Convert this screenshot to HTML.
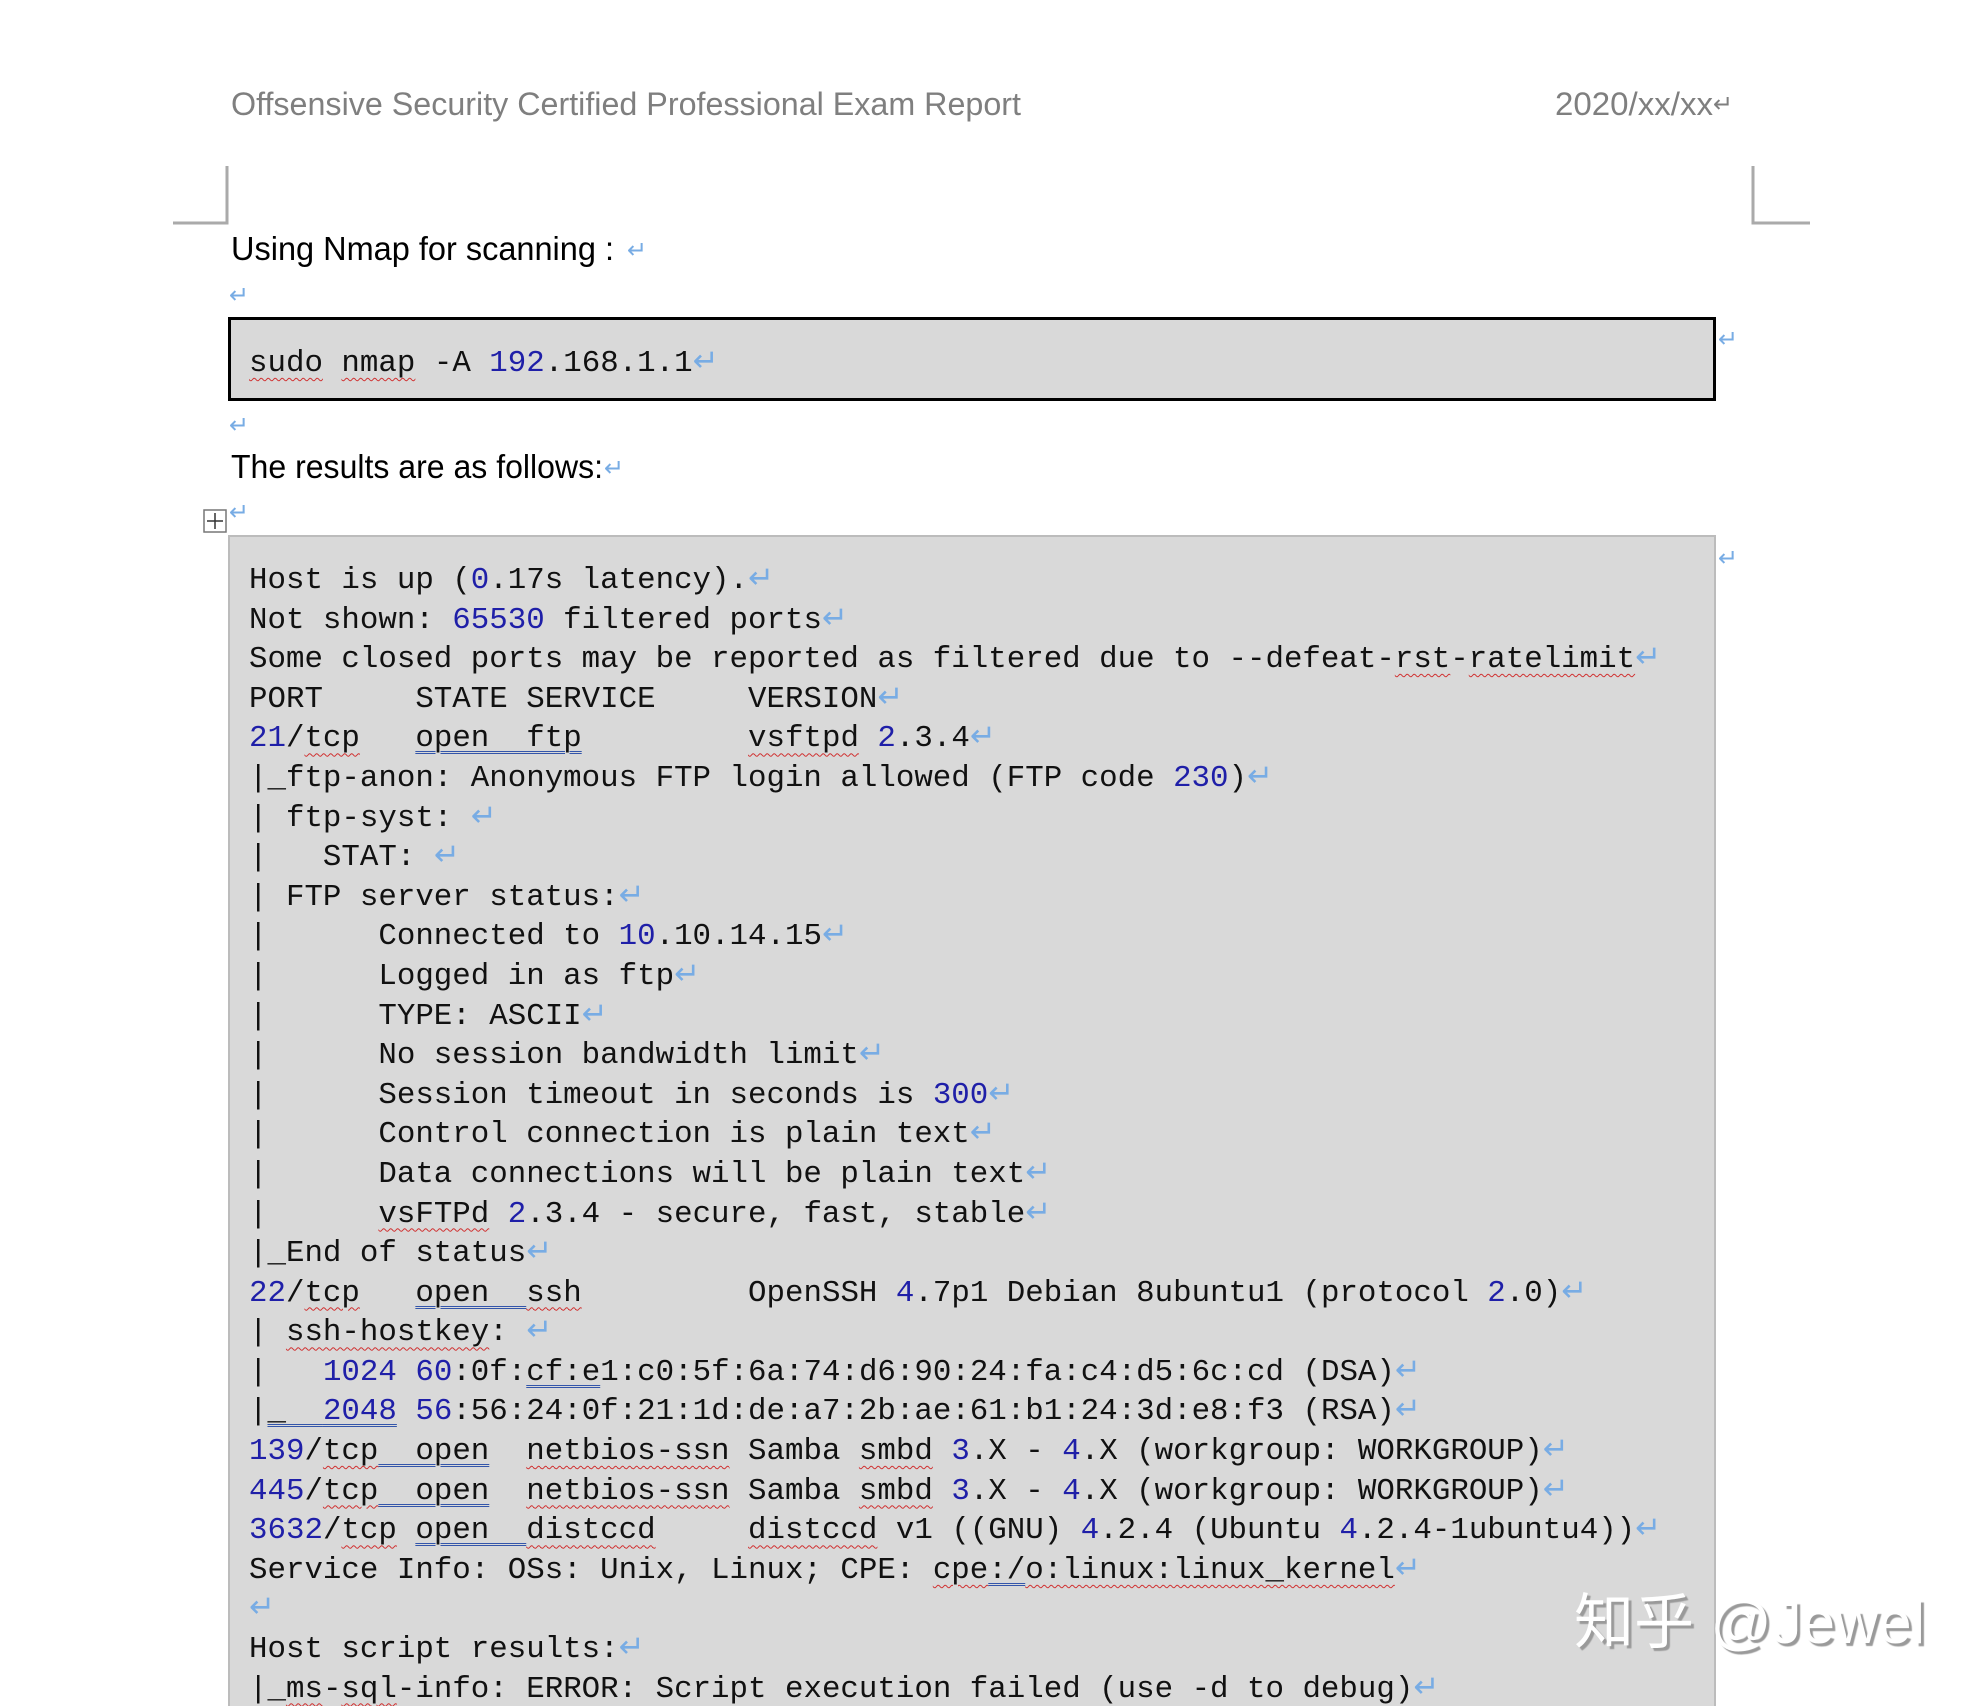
<!DOCTYPE html>
<html><head><meta charset="utf-8">
<style>
html,body{margin:0;padding:0;background:#fff;overflow:hidden;width:1980px;height:1706px;}
body{position:relative;font-family:"Liberation Sans",sans-serif;}
.abs{position:absolute;}
.a{color:#78ace4;}
.n{color:#1f1fa8;}
.w{text-decoration:underline wavy #d03030;text-decoration-thickness:1px;text-underline-offset:6px;}
.d{text-decoration:underline double #3355aa;text-decoration-thickness:1px;text-underline-offset:5px;}
pre{margin:0;font-family:"Liberation Mono",monospace;font-size:30.8px;line-height:39.6px;color:#111;}
.box1{left:228px;top:317px;width:1482px;height:78px;background:#d9d9d9;border:3px solid #000;}
.box2{left:228px;top:535px;width:1484px;height:1180px;background:#d9d9d9;border:2px solid #bcbcbc;}
</style></head><body>
<svg class="abs" style="left:0;top:0" width="1980" height="1706">
<text x="231" y="115" font-family="Liberation Sans" font-size="32" fill="#7f7f7f" textLength="790" lengthAdjust="spacingAndGlyphs">Offsensive Security Certified Professional Exam Report</text>
<text x="1555" y="115" font-family="Liberation Sans" font-size="32" fill="#7f7f7f" textLength="158" lengthAdjust="spacingAndGlyphs">2020/xx/xx</text>
<text x="1713" y="112" font-family="DejaVu Sans" font-size="24" fill="#7f7f7f">↵</text>
<path d="M227 166V223H173" stroke="#aaa" stroke-width="3" fill="none"/>
<path d="M1753 166V223H1810" stroke="#aaa" stroke-width="3" fill="none"/>
<text x="231" y="260" font-family="Liberation Sans" font-size="33" fill="#000" textLength="383" lengthAdjust="spacingAndGlyphs">Using Nmap for scanning :</text>
<text x="627" y="258" font-family="DejaVu Sans" font-size="24" fill="#78ace4">↵</text>
<text x="229" y="303" font-family="DejaVu Sans" font-size="24" fill="#78ace4">↵</text>
<text x="229" y="433" font-family="DejaVu Sans" font-size="24" fill="#78ace4">↵</text>
<text x="231" y="478" font-family="Liberation Sans" font-size="33" fill="#000" textLength="372" lengthAdjust="spacingAndGlyphs">The results are as follows:</text>
<text x="604" y="476" font-family="DejaVu Sans" font-size="24" fill="#78ace4">↵</text>
<text x="229" y="520" font-family="DejaVu Sans" font-size="24" fill="#78ace4">↵</text>
<rect x="204" y="510" width="22" height="22" fill="#fff" stroke="#777" stroke-width="1.5"/>
<path d="M215 513V529M207 521H223" stroke="#333" stroke-width="1.5"/>
<text x="1718" y="347" font-family="DejaVu Sans" font-size="24" fill="#78ace4">↵</text>
<text x="1718" y="566" font-family="DejaVu Sans" font-size="24" fill="#78ace4">↵</text>
</svg>
<div class="abs box1"></div>
<pre class="abs" style="left:249px;top:344px;"><span class="w">sudo</span> <span class="w">nmap</span> -A <span class="n">192</span>.168.1.1<span class="a">↵</span></pre>
<div class="abs box2"></div>
<pre class="abs" style="left:249px;top:561px;">Host is up (<span class="n">0</span>.17s latency).<span class="a">↵</span>
Not shown: <span class="n">65530</span> filtered ports<span class="a">↵</span>
Some closed ports may be reported as filtered due to --defeat-<span class="w">rst</span>-<span class="w">ratelimit</span><span class="a">↵</span>
PORT     STATE SERVICE     VERSION<span class="a">↵</span>
<span class="n">21</span>/<span class="w">tcp</span>   <span class="d">open  ftp</span>         <span class="w">vsftpd</span> <span class="n">2</span>.3.4<span class="a">↵</span>
|_ftp-anon: Anonymous FTP login allowed (FTP code <span class="n">230</span>)<span class="a">↵</span>
| ftp-syst: <span class="a">↵</span>
|   STAT: <span class="a">↵</span>
| FTP server status:<span class="a">↵</span>
|      Connected to <span class="n">10</span>.10.14.15<span class="a">↵</span>
|      Logged in as ftp<span class="a">↵</span>
|      TYPE: ASCII<span class="a">↵</span>
|      No session bandwidth limit<span class="a">↵</span>
|      Session timeout in seconds is <span class="n">300</span><span class="a">↵</span>
|      Control connection is plain text<span class="a">↵</span>
|      Data connections will be plain text<span class="a">↵</span>
|      <span class="w">vsFTPd</span> <span class="n">2</span>.3.4 - secure, fast, stable<span class="a">↵</span>
|_End of status<span class="a">↵</span>
<span class="n">22</span>/<span class="w">tcp</span>   <span class="d">open  </span><span class="w">ssh</span>         OpenSSH <span class="n">4</span>.7p1 Debian 8ubuntu1 (protocol <span class="n">2</span>.0)<span class="a">↵</span>
| <span class="w">ssh-hostkey</span>: <span class="a">↵</span>
|   <span class="n">1024</span> <span class="n">60</span>:0f:<span class="d">cf:e</span>1:c0:5f:6a:74:d6:90:24:fa:c4:d5:6c:cd (DSA)<span class="a">↵</span>
|<span class="d">_  <span class="n">2048</span></span> <span class="n">56</span>:56:24:0f:21:1d:de:a7:2b:ae:61:b1:24:3d:e8:f3 (RSA)<span class="a">↵</span>
<span class="n">139</span>/<span class="w">tcp</span><span class="d">  open</span>  <span class="w">netbios-ssn</span> Samba <span class="w">smbd</span> <span class="n">3</span>.X - <span class="n">4</span>.X (workgroup: WORKGROUP)<span class="a">↵</span>
<span class="n">445</span>/<span class="w">tcp</span><span class="d">  open</span>  <span class="w">netbios-ssn</span> Samba <span class="w">smbd</span> <span class="n">3</span>.X - <span class="n">4</span>.X (workgroup: WORKGROUP)<span class="a">↵</span>
<span class="n">3632</span>/<span class="w">tcp</span> <span class="d">open  </span><span class="w">distccd</span>     <span class="w">distccd</span> v1 ((GNU) <span class="n">4</span>.2.4 (Ubuntu <span class="n">4</span>.2.4-1ubuntu4))<span class="a">↵</span>
Service Info: OSs: Unix, Linux; CPE: <span class="w">cpe</span><span class="d">:/</span><span class="w">o:linux:linux_kernel</span><span class="a">↵</span>
<span class="a">↵</span>
Host script results:<span class="a">↵</span>
|_<span class="w">ms</span>-<span class="w">sql</span>-info: ERROR: Script execution failed (use -d to debug)<span class="a">↵</span></pre>
<div class="abs" style="left:1574px;top:1588px;font-family:'Liberation Sans','Noto Sans CJK SC',sans-serif;font-size:60px;line-height:70px;color:#fff;text-shadow:3px 3px 1px #9a9a9a;white-space:nowrap;">知乎 <span>@Jewel</span></div>
</body></html>
